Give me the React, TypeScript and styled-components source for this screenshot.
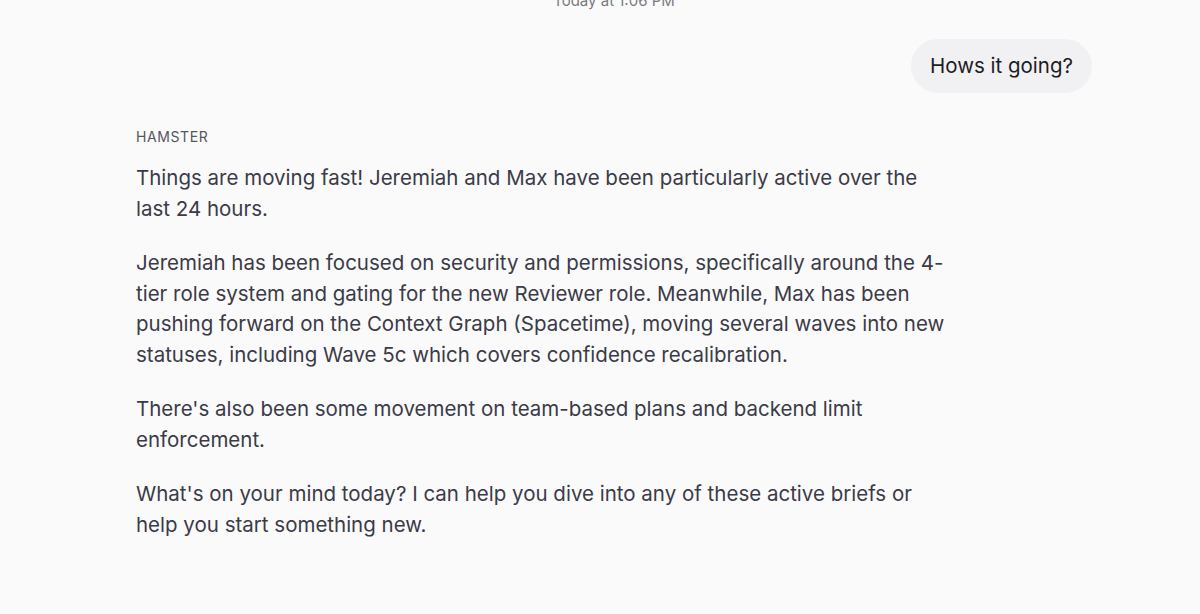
import React from 'react'
import styled, { createGlobalStyle } from 'styled-components'

const GlobalStyle = createGlobalStyle`
    html, body {
        margin: 0;
        padding: 0;
        background: #fafafa;
    }
    body {
        font-family: Inter, 'Noto Sans', 'Liberation Sans', sans-serif;
        -webkit-font-smoothing: antialiased;
    }
`

type Message = {
    id: number
    role: 'user' | 'assistant'
    author?: string
    paragraphs: string[]
}

const MESSAGES: Message[] = [
    { id: 1, role: 'user', paragraphs: ['Hows it going?'] },
    {
        id: 2,
        role: 'assistant',
        author: 'Hamster',
        paragraphs: [
            'Things are moving fast! Jeremiah and Max have been particularly active over the last 24 hours.',
            'Jeremiah has been focused on security and permissions, specifically around the 4-tier role system and gating for the new Reviewer role. Meanwhile, Max has been pushing forward on the Context Graph (Spacetime), moving several waves into new statuses, including Wave 5c which covers confidence recalibration.',
            'There\'s also been some movement on team-based plans and backend limit enforcement.',
            'What\'s on your mind today? I can help you dive into any of these active briefs or help you start something new.',
        ],
    },
]

export default function App(): JSX.Element {
    return (
        <>
            <GlobalStyle />
            <StyledChat className="chat">
                <div className="chat--thread">
                    <span className="chat--timestamp">Today at 1:06 PM</span>
                    {MESSAGES.map(message =>
                        message.role === 'user' ? (
                            <div className="chat--userRow" key={message.id}>
                                <div className="chat--userRow__bubble">{message.paragraphs[0]}</div>
                            </div>
                        ) : (
                            <div className="chat--reply" key={message.id}>
                                <span className="chat--reply__author">{message.author}</span>
                                <div className="chat--reply__body">
                                    {message.paragraphs.map((text, i) => (
                                        <p key={i}>{text}</p>
                                    ))}
                                </div>
                            </div>
                        )
                    )}
                </div>
            </StyledChat>
        </>
    )
}

const StyledChat = styled.main`
    min-height: 100vh;
    background: #fafafa;
    overflow: hidden;

    .chat {
        &--thread {
            display: flex;
            flex-direction: column;
            padding: 0 108px 0 136px;
        }

        &--timestamp {
            align-self: center;
            margin-top: -9px;
            font-size: 15px;
            line-height: 20px;
            color: #7a7a82;
        }

        &--userRow {
            display: flex;
            justify-content: flex-end;
            margin-top: 28px;

            &__bubble {
                background: #f1f1f4;
                color: #1c1c1f;
                font-size: 20.5px;
                line-height: 24px;
                padding: 15px 19px;
                border-radius: 27px;
            }
        }

        &--reply {
            display: flex;
            flex-direction: column;
            margin-top: 36px;

            &__author {
                font-size: 14px;
                line-height: 16px;
                letter-spacing: 0.6px;
                text-transform: uppercase;
                color: #55555e;
            }

            &__body {
                max-width: 816px;
                margin-top: 18px;
                color: #3b3b48;
                font-size: 20.5px;
                line-height: 30.5px;

                p {
                    margin: 0 0 24px;
                }
            }
        }
    }
`
